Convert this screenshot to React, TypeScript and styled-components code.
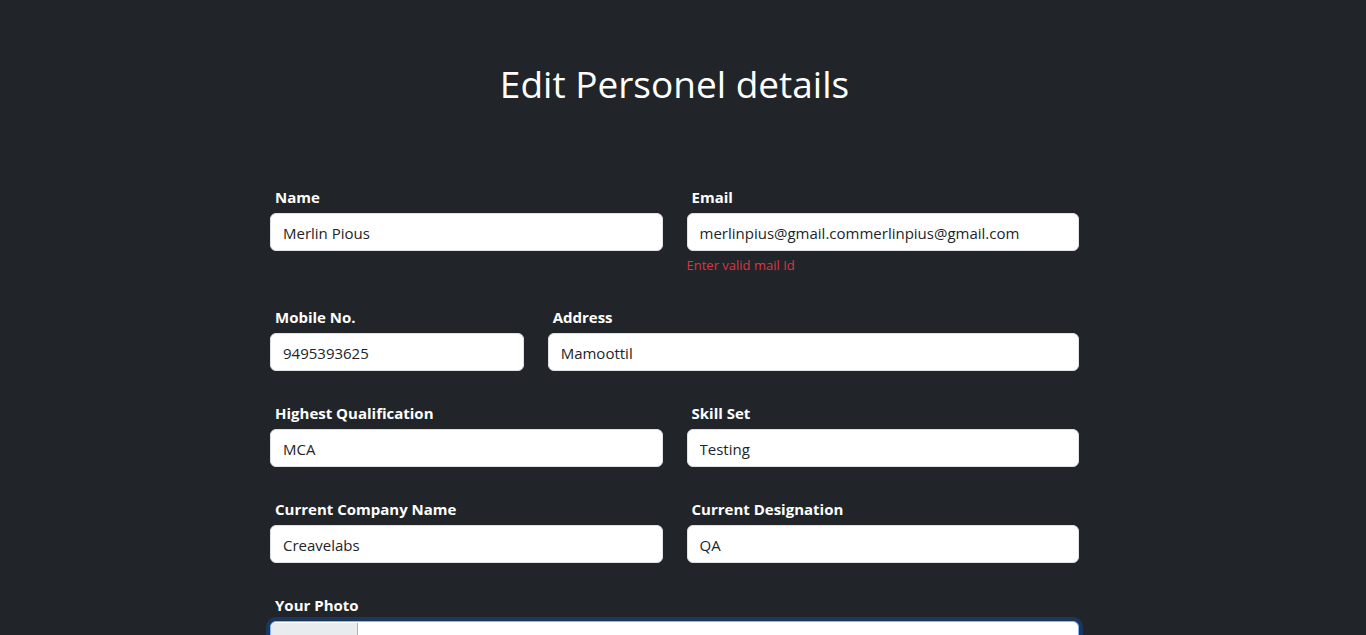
import React from "react";
import styled, { createGlobalStyle } from "styled-components";

const GlobalStyle = createGlobalStyle`
  *, *::before, *::after { box-sizing: border-box; }
  html, body { margin: 0; background: #212529; }
  body {
    font-family: "Open Sans", "Noto Sans", sans-serif;
    color: #dee2e6;
    -webkit-font-smoothing: antialiased;
  }
`;

const Page = styled.div`
  min-height: 100vh;
  background: #212529;
  padding-right: 17px;
  padding-top: 60px;
`;

const Title = styled.h1`
  margin: 0;
  font-size: 37px;
  line-height: 48px;
  font-weight: 400;
  color: #ffffff;
  text-align: center;
`;

const Form = styled.form`
  width: 809px;
  margin: 77px auto 0;
  display: flex;
  flex-direction: column;
  gap: 30px;
`;

const FieldRow = styled.div<{ $layout: "half" | "third" | "full" }>`
  display: grid;
  column-gap: 24px;
  grid-template-columns: ${(p) =>
    p.$layout === "half"
      ? "1fr 1fr"
      : p.$layout === "third"
      ? "calc((100% + 24px) / 3 - 24px) 1fr"
      : "1fr"};
`;

const Field = styled.div`
  display: flex;
  flex-direction: column;
`;

const Label = styled.label`
  display: block;
  padding-left: 5px;
  margin-bottom: 4px;
  font-size: 15px;
  line-height: 24px;
  font-weight: 700;
  color: #ffffff;
`;

const Input = styled.input`
  display: block;
  width: 100%;
  height: 38px;
  padding: 1px 12px 0;
  font-family: inherit;
  font-size: 15px;
  line-height: 24px;
  color: #212529;
  background: #ffffff;
  border: 1px solid #dee2e6;
  border-radius: 6px;
  outline: none;
`;

const FileInput = styled.input<{ $focused?: boolean }>`
  display: block;
  width: 100%;
  height: 38px;
  padding: 6px 12px;
  font-family: inherit;
  font-size: 15px;
  line-height: 24px;
  color: #212529;
  background: #ffffff;
  border: 1px solid ${(p) => (p.$focused ? "#86b7fe" : "#dee2e6")};
  border-radius: 6px;
  outline: none;
  overflow: hidden;
  box-shadow: ${(p) => (p.$focused ? "0 0 0 4px rgba(13, 110, 253, 0.25)" : "none")};

  &::file-selector-button {
    width: 87px;
    height: 36px;
    padding: 6px 0;
    margin: -6px 12px -6px -12px;
    font-family: inherit;
    font-size: 14px;
    color: #212529;
    background: #e9ecef;
    border: 0;
    border-inline-end: 1px solid ${(p) => (p.$focused ? "#86b7fe" : "#dee2e6")};
    border-radius: 0;
  }
`;

const ErrorText = styled.div`
  margin-top: 4px;
  font-size: 13px;
  line-height: 20px;
  color: #dc3545;
`;

type FieldDef = { label: string; value: string; error?: string };

const rows: { layout: "half" | "third"; fields: FieldDef[] }[] = [
  {
    layout: "half",
    fields: [
      { label: "Name", value: "Merlin Pious" },
      {
        label: "Email",
        value: "merlinpius@gmail.commerlinpius@gmail.com",
        error: "Enter valid mail Id",
      },
    ],
  },
  {
    layout: "third",
    fields: [
      { label: "Mobile No.", value: "9495393625" },
      { label: "Address", value: "Mamoottil" },
    ],
  },
  {
    layout: "half",
    fields: [
      { label: "Highest Qualification", value: "MCA" },
      { label: "Skill Set", value: "Testing" },
    ],
  },
  {
    layout: "half",
    fields: [
      { label: "Current Company Name", value: "Creavelabs" },
      { label: "Current Designation", value: "QA" },
    ],
  },
];

export default function App() {
  return (
    <>
      <GlobalStyle />
      <Page>
        <Title>Edit Personel details</Title>
        <Form onSubmit={(e) => e.preventDefault()}>
          {rows.map((row, ri) => (
            <FieldRow key={ri} $layout={row.layout}>
              {row.fields.map((f) => (
                <Field key={f.label}>
                  <Label>{f.label}</Label>
                  <Input type="text" defaultValue={f.value} />
                  {f.error && <ErrorText>{f.error}</ErrorText>}
                </Field>
              ))}
            </FieldRow>
          ))}
          <FieldRow $layout="full">
            <Field>
              <Label>Your Photo</Label>
              <FileInput type="file" accept="image/*" $focused />
            </Field>
          </FieldRow>
        </Form>
      </Page>
    </>
  );
}
